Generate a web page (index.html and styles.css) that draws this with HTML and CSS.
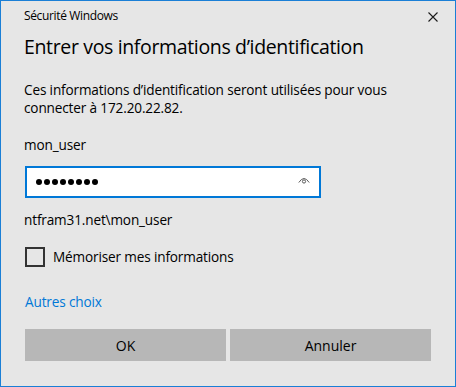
FILE: index.html
```html
<!DOCTYPE html>
<html>
<head>
    <title>Sécurité Windows</title>
    <link rel="stylesheet" href="styles.css">
</head>
<body>
    <div class="dialog">
        <div class="titlebar">
            <span class="title">Sécurité Windows</span>
            <svg class="close" width="10" height="10" viewBox="0 0 10 10">
                <path d="M0.5 0.5 L9.5 9.5 M9.5 0.5 L0.5 9.5" stroke="#1a1a1a" stroke-width="1.1" fill="none"/>
            </svg>
        </div>
        <h1>Entrer vos informations d’identification</h1>
        <p class="intro">Ces informations d’identification seront utilisées pour vous connecter à 172.20.22.82.</p>
        <div class="user">mon_user</div>
        <div class="password-box">
            <div class="dots">
                <span></span><span></span><span></span><span></span>
                <span></span><span></span><span></span><span></span>
            </div>
            <svg class="reveal" width="12" height="9" viewBox="0 0 12 9">
                <path d="M0.8 6.5 Q6 -1.5 11.2 6.5" stroke="#5a5a5a" stroke-width="1" fill="none"/>
                <circle cx="6" cy="5.5" r="1.6" stroke="#5a5a5a" stroke-width="1" fill="none"/>
            </svg>
        </div>
        <div class="domain">ntfram31.net\mon_user</div>
        <label class="remember">
            <span class="checkbox"></span>
            <span>Mémoriser mes informations</span>
        </label>
        <a class="more" href="#">Autres choix</a>
        <div class="button-group">
            <button type="button">OK</button>
            <button type="button">Annuler</button>
        </div>
    </div>
</body>
</html>
```

FILE: styles.css
```css
body {
    margin: 0;
    font-family: "Segoe UI", "Open Sans", sans-serif;
    color: #000;
}
.dialog {
    width: 456px;
    height: 387px;
    box-sizing: border-box;
    border: 1px solid #1a7fd6;
    background: #e6e6e6;
    padding: 0 23px;
}
.titlebar {
    display: flex;
    justify-content: space-between;
    align-items: center;
    padding-top: 7px;
    height: 16px;
}
.title {
    font-size: 12px;
    line-height: 16px;
    letter-spacing: -0.35px;
}
.close {
    margin-right: -6px;
    margin-top: 1px;
}
h1 {
    font-size: 19.5px;
    font-weight: normal;
    line-height: 28px;
    letter-spacing: -0.35px;
    margin: 9px 0 0;
}
.intro,
.user,
.domain,
.remember,
.more {
    font-size: 13.6px;
    line-height: 18px;
    letter-spacing: -0.15px;
}
.intro {
    margin: 20px 0 0;
}
.user {
    margin-top: 19px;
}
.password-box {
    display: flex;
    align-items: center;
    justify-content: space-between;
    width: 296px;
    height: 32px;
    box-sizing: border-box;
    margin: 12px 0 0 1px;
    padding: 0 9px 0 9px;
    background: #fff;
    border: 2px solid #0078d7;
}
.dots {
    display: flex;
    gap: 2px;
}
.dots span {
    width: 6px;
    height: 6px;
    border-radius: 50%;
    background: #000;
}
.reveal {
    margin-top: -4px;
}
.domain {
    margin-top: 13px;
}
.remember {
    display: flex;
    align-items: center;
    gap: 8px;
    margin: 18px 0 0 1px;
}
.checkbox {
    width: 20px;
    height: 20px;
    box-sizing: border-box;
    border: 2px solid #333;
}
.more {
    display: block;
    margin: 26px 0 0 1px;
    color: #0078d7;
    text-decoration: none;
}
.button-group {
    display: flex;
    gap: 4px;
    margin: 18px 0 0 1px;
}
button {
    width: 201px;
    height: 32px;
    border: none;
    background: #b7b7b7;
    font-family: inherit;
    font-size: 14px;
    color: #000;
    padding: 0;
}
```
